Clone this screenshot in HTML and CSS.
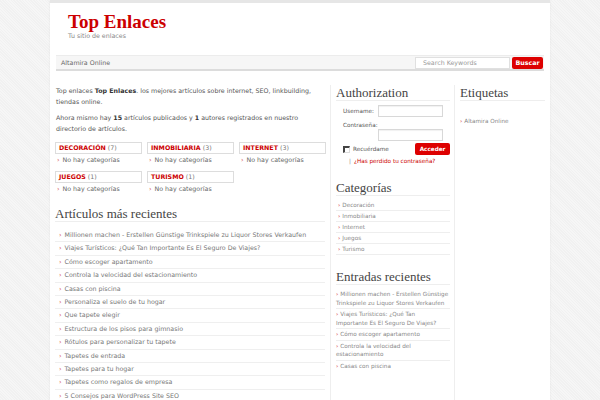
FILE: index.html
```html
<!DOCTYPE html>
<html>
<head>
<meta charset="utf-8">
<link rel="stylesheet" href="styles.css">
</head>
<body>
<div class="page">
  <div class="header">
    <div class="logo">Top Enlaces</div>
    <div class="tagline">Tu sitio de enlaces</div>
  </div>
  <div class="nav">
    <span class="nav-link">Altamira Online</span>
    <div class="search">
      <span class="search-input">Search Keywords</span>
      <span class="search-btn">Buscar</span>
    </div>
  </div>
  <div class="columns">
    <div class="main">
      <p class="intro">Top enlaces <b>Top Enlaces</b>. los mejores artículos sobre internet, SEO, linkbuilding, tiendas online.</p>
      <p class="intro">Ahora mismo hay <b>15</b> artículos publicados y <b>1</b> autores registrados en nuestro directorio de artículos.</p>
      <div class="cats">
        <div class="cat"><div class="cat-box"><b>DECORACIÓN</b> (7)</div><div class="cat-sub"><span class="arr">›</span>No hay categorías</div></div>
        <div class="cat"><div class="cat-box"><b>INMOBILIARIA</b> (3)</div><div class="cat-sub"><span class="arr">›</span>No hay categorías</div></div>
        <div class="cat"><div class="cat-box"><b>INTERNET</b> (3)</div><div class="cat-sub"><span class="arr">›</span>No hay categorías</div></div>
        <div class="cat"><div class="cat-box"><b>JUEGOS</b> (1)</div><div class="cat-sub"><span class="arr">›</span>No hay categorías</div></div>
        <div class="cat"><div class="cat-box"><b>TURISMO</b> (1)</div><div class="cat-sub"><span class="arr">›</span>No hay categorías</div></div>
      </div>
      <h2 class="heading main-heading">Artículos más recientes</h2>
      <ul class="recent">
        <li><span class="arr">›</span>Millionen machen - Erstellen Günstige Trinkspiele zu Liquor Stores Verkaufen</li>
        <li><span class="arr">›</span>Viajes Turísticos: ¿Qué Tan Importante Es El Seguro De Viajes?</li>
        <li><span class="arr">›</span>Cómo escoger apartamento</li>
        <li><span class="arr">›</span>Controla la velocidad del estacionamiento</li>
        <li><span class="arr">›</span>Casas con piscina</li>
        <li><span class="arr">›</span>Personaliza el suelo de tu hogar</li>
        <li><span class="arr">›</span>Que tapete elegir</li>
        <li><span class="arr">›</span>Estructura de los pisos para gimnasio</li>
        <li><span class="arr">›</span>Rótulos para personalizar tu tapete</li>
        <li><span class="arr">›</span>Tapetes de entrada</li>
        <li><span class="arr">›</span>Tapetes para tu hogar</li>
        <li><span class="arr">›</span>Tapetes como regalos de empresa</li>
        <li><span class="arr">›</span>5 Consejos para WordPress Site SEO</li>
      </ul>
    </div>
    <div class="side1">
      <h2 class="heading">Authorization</h2>
      <div class="login">
        <div class="row1"><span class="lbl">Username:</span><span class="field"></span></div>
        <div class="lbl2">Contraseña:</div>
        <div class="row2"><span class="field"></span></div>
        <div class="row3"><span class="chk"></span><span class="remember">Recuérdame</span><span class="btn">Acceder</span></div>
        <div class="lost"><span class="bar">|</span>¿Has perdido tu contraseña?</div>
      </div>
      <h2 class="heading sec">Categorías</h2>
      <ul class="slist">
        <li><span class="sarr">›</span>Decoración</li>
        <li><span class="sarr">›</span>Inmobiliaria</li>
        <li><span class="sarr">›</span>Internet</li>
        <li><span class="sarr">›</span>Juegos</li>
        <li><span class="sarr">›</span>Turismo</li>
      </ul>
      <h2 class="heading sec">Entradas recientes</h2>
      <ul class="slist entries">
        <li><span class="sarr">›</span>Millionen machen - Erstellen Günstige Trinkspiele zu Liquor Stores Verkaufen</li>
        <li><span class="sarr">›</span>Viajes Turísticos: ¿Qué Tan<br>Importante Es El Seguro De Viajes?</li>
        <li><span class="sarr">›</span>Cómo escoger apartamento</li>
        <li><span class="sarr">›</span>Controla la velocidad del estacionamiento</li>
        <li class="last"><span class="sarr">›</span>Casas con piscina</li>
      </ul>
    </div>
    <div class="side2">
      <h2 class="heading">Etiquetas</h2>
      <div class="tags"><span class="sarr">›</span>Altamira Online</div>
    </div>
  </div>
</div>
</body>
</html>
```

FILE: styles.css
```css
html, body {
  margin: 0;
  padding: 0;
}
body {
  background-color: #f4f4f4;
  background-image: repeating-linear-gradient(45deg, #f1f1f1 0, #f1f1f1 1px, #f6f6f6 1px, #f6f6f6 2px);
  font-family: "DejaVu Sans", Verdana, sans-serif;
  font-size: 6.3px;
  color: #555;
  height: 400px;
  overflow: hidden;
}
.page {
  width: 490px;
  margin: 0 auto;
  padding: 0 5px;
  background: #fff;
  border-top: 3px solid #e6e6e6;
  box-shadow: 0 0 2px rgba(0,0,0,0.07);
  min-height: 397px;
}
.header {
  padding: 9px 0 0 13px;
  height: 43px;
}
.logo {
  font-family: "Liberation Serif", "Times New Roman", serif;
  font-weight: bold;
  font-size: 19px;
  line-height: 20px;
  color: #cc0000;
}
.tagline {
  color: #888;
  line-height: 8px;
}
.nav {
  margin: 0 1px;
  height: 13px;
  background: #f6f6f6;
  border-top: 1px solid #ececec;
  border-bottom: 2px solid #dcdcdc;
  display: flex;
  align-items: center;
  justify-content: space-between;
  padding: 0 1px 0 5px;
}
.nav-link {
  color: #666;
}
.search {
  display: flex;
  gap: 2px;
  align-items: center;
}
.search-input {
  width: 86px;
  height: 10px;
  border: 1px solid #e0e0e0;
  background: #fff;
  color: #999;
  line-height: 10px;
  padding-left: 7px;
}
.search-btn {
  width: 31px;
  height: 12px;
  line-height: 12px;
  text-align: center;
  background: #dd0000;
  color: #fff;
  font-weight: bold;
  border-radius: 2px;
}
.columns {
  display: flex;
  margin-top: 14px;
  align-items: stretch;
  min-height: 315px;
}
.main {
  width: 270px;
  padding-right: 5px;
  border-right: 1px solid #eeeeee;
}
.side1 {
  width: 114px;
  padding: 0 4px 0 5px;
  border-right: 1px solid #eeeeee;
  font-size: 5.7px;
}
.side2 {
  width: 85px;
  padding-left: 5px;
  font-size: 5.7px;
}
p.intro {
  margin: 0 0 5px;
  line-height: 11px;
  color: #555;
  padding-left: 1px;
}
p.intro b {
  color: #333;
}
.cats {
  display: grid;
  grid-template-columns: 87px 87px 87px;
  column-gap: 5px;
  row-gap: 6px;
  margin-top: 8px;
}
.cat-box {
  border: 1px solid #dddddd;
  height: 10px;
  line-height: 10px;
  padding-left: 3px;
  color: #777;
}
.cat-box b {
  color: #cc0000;
}
.cat-sub {
  padding-top: 1px;
  line-height: 10px;
  color: #666;
  padding-left: 2px;
}
.arr {
  color: #d04040;
  margin-right: 3px;
}
.heading {
  font-family: "Liberation Serif", "Times New Roman", serif;
  font-weight: normal;
  font-size: 13px;
  line-height: 15px;
  color: #444;
  margin: 0;
  border-bottom: 1px solid #eeeeee;
}
.main-heading {
  margin-top: 12px;
}
ul {
  list-style: none;
  margin: 0;
  padding: 0;
}
.recent {
  margin-top: 7px;
}
.recent li {
  line-height: 12.4px;
  border-bottom: 1px solid #efefef;
  color: #777;
  padding-left: 4px;
}
.login {
  padding-left: 7px;
  color: #555;
}
.row1 {
  display: flex;
  align-items: center;
  margin-top: 4px;
}
.lbl {
  width: 35px;
}
.field {
  display: block;
  width: 63px;
  height: 10px;
  border: 1px solid #d8d8d8;
  box-shadow: inset 0 1px 1px rgba(0,0,0,0.06);
  background: #fff;
}
.lbl2 {
  margin-top: 4px;
  line-height: 8px;
}
.row2 {
  padding-left: 35px;
}
.row3 {
  display: flex;
  align-items: center;
  margin-top: 2px;
  height: 12px;
}
.chk {
  width: 4px;
  height: 4px;
  border-top: 2px solid #444;
  border-left: 2px solid #444;
  border-right: 1px solid #ddd;
  border-bottom: 1px solid #ddd;
  margin-right: 3px;
}
.remember {
  flex: 1;
}
.btn {
  width: 35px;
  height: 12px;
  line-height: 12px;
  text-align: center;
  background: #dd0000;
  color: #fff;
  font-weight: bold;
  border-radius: 2px;
}
.lost {
  margin-top: 2px;
  padding-left: 6px;
  line-height: 9px;
  color: #cc0000;
}
.bar {
  color: #888;
  margin-right: 3px;
}
.sec {
  margin-top: 14px;
}
.slist {
  margin-top: 4px;
}
.slist li {
  line-height: 10px;
  border-bottom: 1px solid #eeeeee;
  color: #888;
  padding-left: 2px;
}
.sarr {
  color: #d04040;
  margin-right: 2px;
}
.entries {
  margin-top: 4px;
}
.entries li {
  line-height: 8.5px;
  padding: 1px 0;
}
.entries li.last {
  border-bottom: none;
}
.tags {
  margin-top: 15px;
  line-height: 10px;
  color: #888;
}
```
